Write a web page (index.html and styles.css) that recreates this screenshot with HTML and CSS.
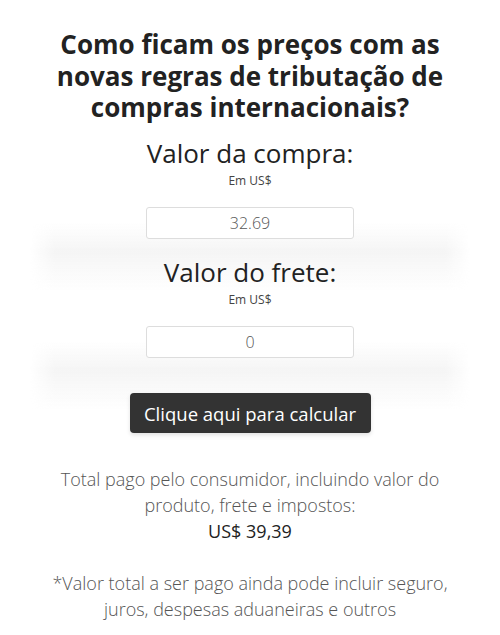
FILE: index.html
```html
<!DOCTYPE html>
<html lang="pt-BR">
<head>
    <meta charset="UTF-8">
    <meta name="viewport" content="width=device-width, initial-scale=1.0">
    <title>Calculadora de tributação</title>
    <link rel="stylesheet" href="styles.css">
</head>
<body>
    <div class="calc">
        <h1 class="calc-title">Como ficam os preços com as novas regras de tributação de compras internacionais?</h1>

        <div class="field">
            <label class="field-label" for="compra">Valor da compra:</label>
            <span class="field-hint">Em US$</span>
            <input class="field-input" type="text" id="compra" value="32.69">
        </div>

        <div class="field">
            <label class="field-label" for="frete">Valor do frete:</label>
            <span class="field-hint">Em US$</span>
            <input class="field-input" type="text" id="frete" value="0">
        </div>

        <button class="calc-btn" type="button">Clique aqui para calcular</button>

        <p class="result">Total pago pelo consumidor, incluindo valor do produto, frete e impostos:<br><strong>US$ 39,39</strong></p>

        <p class="note">*Valor total a ser pago ainda pode incluir seguro, juros, despesas aduaneiras e outros</p>
    </div>
</body>
</html>
```

FILE: styles.css
```css
body { margin: 0; background: #fff; font-family: "Open Sans", "Noto Sans", sans-serif; color: #222; }
.calc { display: flex; flex-direction: column; align-items: center; text-align: center; padding-top: 29px; }
.calc-title { margin: 0; max-width: 400px; font-size: 26px; line-height: 31.5px; font-weight: 700; color: #222; }

.field { position: relative; display: flex; flex-direction: column; align-items: center; }
.field::after { content: ""; position: absolute; left: calc(50% - 220px); width: 440px; top: 100%; height: 70px; margin-top: -17px; z-index: -1;
  background: linear-gradient(to bottom, rgba(244,244,244,0) 0%, #f5f5f5 42%, rgba(244,244,244,0) 100%);
  -webkit-mask-image: linear-gradient(to right, transparent 0, #000 25px, #000 calc(100% - 25px), transparent 100%); }
.field:first-of-type { margin-top: 13.5px; }
.field + .field { margin-top: 17px; }
.field-label { font-size: 26px; line-height: 32px; color: #222; }
.field-hint { font-size: 12px; line-height: 16px; color: #444; margin-top: 4px; }
.field-input { box-sizing: border-box; width: 208px; height: 32px; margin-top: 18px; border: 1px solid #ddd; border-radius: 3px;
  background: #fff; text-align: center; font-family: inherit; font-size: 16px; font-weight: 300; color: #555; padding: 0; }

.calc-btn { margin-top: 35px; width: 241px; height: 40px; border: none; border-radius: 4px; background: #333; color: #fff;
  font-family: inherit; font-size: 18.5px; box-shadow: 0 2px 4px rgba(0,0,0,0.12); cursor: pointer; }

.result { margin: 33px 0 0; max-width: 400px; font-size: 18px; line-height: 26px; font-weight: 300; color: #555; }
.result strong { font-weight: 400; color: #222; }
.note { margin: 26px 0 0; max-width: 420px; font-size: 18px; line-height: 26px; font-weight: 300; color: #555; }
```
